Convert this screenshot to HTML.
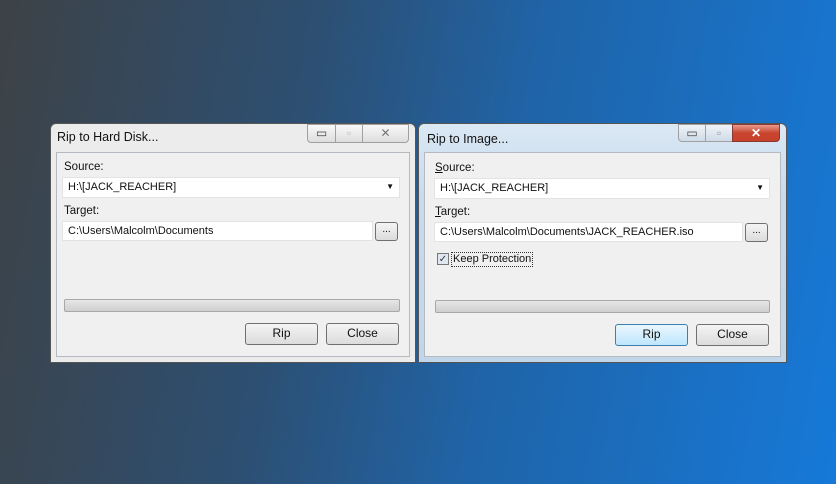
<!DOCTYPE html><html><head><style>
body{margin:0;width:836px;height:484px;overflow:hidden;background:linear-gradient(100deg,#3d4246 0%,#2d4f72 35%,#1f64a8 60%,#1679d8 100%);font-family:"Liberation Sans",sans-serif;font-size:12px;color:#111;position:relative}
.a{position:absolute;box-sizing:border-box}
.win{border:1px solid #555;border-radius:6px 6px 0 0}
.cl{background:#f0f0f0;border:1px solid #b4bac0}
.in{background:#fff;border:1px solid #e3e3e3;padding:3px 0 0 5px;font-size:11px}
.btn{background:linear-gradient(#f4f4f4,#dcdcdc);border:1px solid #707070;border-radius:3px;text-align:center;line-height:19px}
.prog{background:linear-gradient(#e6e6e6,#cfcfcf);border:1px solid #a8a8a8;border-radius:2px}
.cb{border:1px solid #a0a0a0;background:linear-gradient(#f8f8f8,#dedede)}
</style></head><body>
<!-- left -->
<div class="a win" style="left:50px;top:123px;width:366px;height:240px;background:#ececec"></div>
<div class="a" style="left:57px;top:130px;font-size:12.5px">Rip to Hard Disk...</div>
<div class="a cb" style="left:307px;top:124px;width:29px;height:19px;border-radius:0 0 0 4px;color:#444;text-align:center;line-height:17px">▭</div>
<div class="a cb" style="left:335px;top:124px;width:28px;height:19px;color:#bbb;text-align:center;line-height:17px">▫</div>
<div class="a cb" style="left:362px;top:124px;width:47px;height:19px;border-radius:0 0 4px 0;color:#777;text-align:center;line-height:17px">✕</div>
<div class="a cl" style="left:56px;top:152px;width:354px;height:205px"></div>
<div class="a" style="left:64px;top:161px;font-size:11.5px">Source:</div>
<div class="a in" style="left:62px;top:177px;width:338px;height:21px">H:\[JACK_REACHER]<span style="position:absolute;right:5px;top:4px;font-size:8px">▼</span></div>
<div class="a" style="left:64px;top:205px;font-size:11.5px">Target:</div>
<div class="a in" style="left:62px;top:221px;width:311px;height:20px">C:\Users\Malcolm\Documents</div>
<div class="a btn" style="left:375px;top:222px;width:23px;height:19px;line-height:14px;font-size:10px">...</div>
<div class="a prog" style="left:64px;top:299px;width:336px;height:13px"></div>
<div class="a btn" style="left:245px;top:323px;width:73px;height:22px">Rip</div>
<div class="a btn" style="left:326px;top:323px;width:73px;height:22px">Close</div>
<!-- right -->
<div class="a win" style="left:418px;top:123px;width:369px;height:240px;background:linear-gradient(#dbe8f4,#c8dbee 30%,#c2d6ea)"></div>
<div class="a" style="left:427px;top:132px;font-size:12.5px">Rip to Image...</div>
<div class="a cb" style="left:678px;top:124px;width:28px;height:18px;border-radius:0 0 0 4px;background:linear-gradient(#eef3f8,#cfdbe8);color:#444;text-align:center;line-height:16px">▭</div>
<div class="a cb" style="left:705px;top:124px;width:28px;height:18px;background:linear-gradient(#eef3f8,#cfdbe8);color:#999;text-align:center;line-height:16px">▫</div>
<div class="a" style="left:732px;top:124px;width:48px;height:18px;border:1px solid #8a3a32;border-radius:0 0 4px 0;background:linear-gradient(#e99a8c,#c9452f 50%,#c7412a);color:#fff;text-align:center;line-height:16px;font-weight:bold">✕</div>
<div class="a cl" style="left:424px;top:152px;width:357px;height:205px"></div>
<div class="a" style="left:435px;top:162px;font-size:11.5px"><u>S</u>ource:</div>
<div class="a in" style="left:434px;top:178px;width:336px;height:21px">H:\[JACK_REACHER]<span style="position:absolute;right:5px;top:4px;font-size:8px">▼</span></div>
<div class="a" style="left:435px;top:206px;font-size:11.5px"><u>T</u>arget:</div>
<div class="a in" style="left:434px;top:222px;width:309px;height:20px">C:\Users\Malcolm\Documents\JACK_REACHER.iso</div>
<div class="a btn" style="left:745px;top:223px;width:23px;height:19px;line-height:14px;font-size:10px">...</div>
<div class="a" style="left:437px;top:253px;width:12px;height:12px;border:1px solid #777;background:#dfe6ee;font-size:10px;line-height:11px;text-align:center;color:#334">✓</div>
<div class="a" style="left:451px;top:252px;border:1px dotted #333;padding:0 1px;line-height:13px;font-size:11px">Keep Protection</div>
<div class="a prog" style="left:435px;top:300px;width:335px;height:13px"></div>
<div class="a btn" style="left:615px;top:324px;width:73px;height:22px;border-color:#3c7fb1;background:linear-gradient(#eaf6fd,#bee6fd)">Rip</div>
<div class="a btn" style="left:696px;top:324px;width:73px;height:22px">Close</div>
</body></html>
